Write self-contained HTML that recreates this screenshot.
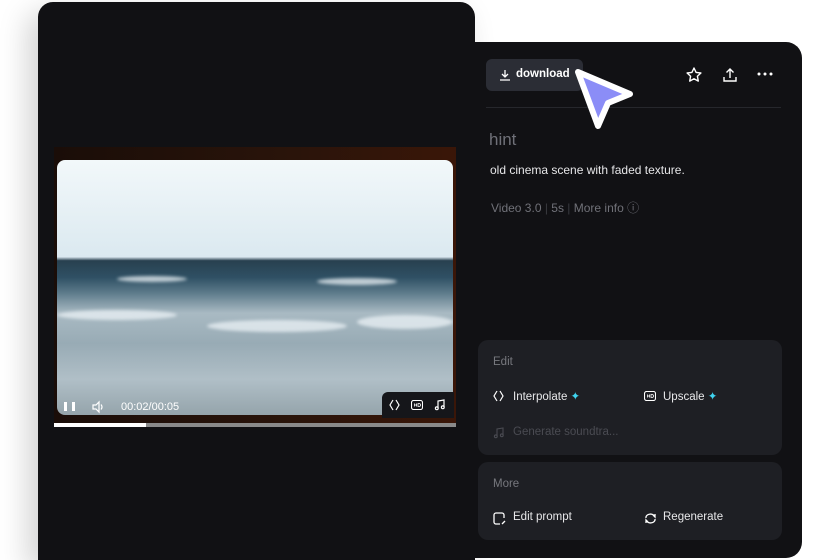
<!DOCTYPE html>
<html><head><meta charset="utf-8"><style>
*{box-sizing:border-box;margin:0;padding:0}
html,body{width:840px;height:560px;overflow:hidden}
body{background:#fff;position:relative;font-family:"Liberation Sans",sans-serif}
.left{position:absolute;left:38px;top:2px;width:437px;height:558px;background:#111114;border-radius:15px 15px 0 0;box-shadow:-10px 10px 30px rgba(0,0,0,.18)}
.right{position:absolute;left:470px;top:42px;width:332px;height:516px;background:#111114;border-radius:0 16px 16px 0}
.frame{position:absolute;left:54px;top:147px;width:402px;height:277px;background:linear-gradient(90deg,#1a0d08,#2a140a 60%,#3a1608);}
.img{position:absolute;left:57px;top:160px;width:396px;height:255px;border-radius:8px;overflow:hidden;
background:linear-gradient(180deg,#f2f8fa 0%,#dbe9f0 38%,#28404f 39.5%,#2f5064 46%,#5c7a8a 52%,#a9bac3 60%,#98abb5 72%,#b0bfc7 86%,#95a4ab 100%)}
.w{position:absolute;background:rgba(235,242,245,.75);border-radius:50%;filter:blur(1.5px)}
.prog{position:absolute;top:423px;height:4px}
.ctl{position:absolute;color:#fff;font-size:11px}
.t{position:absolute;white-space:nowrap}
.card{position:absolute;left:478px;width:304px;background:#1e1f24;border-radius:10px}
svg{position:absolute}
</style></head><body>
<div class="left"></div>
<div class="frame"></div>
<div class="img">
<div class="w" style="left:60px;top:116px;width:70px;height:6px"></div>
<div class="w" style="left:260px;top:118px;width:80px;height:7px"></div>
<div class="w" style="left:0px;top:150px;width:120px;height:10px"></div>
<div class="w" style="left:150px;top:160px;width:140px;height:12px"></div>
<div class="w" style="left:300px;top:155px;width:96px;height:14px"></div>
</div>
<div class="prog" style="left:54px;width:92px;background:#fff"></div>
<div class="prog" style="left:146px;width:310px;background:#8a8a8a"></div>
<div style="position:absolute;left:64px;top:402px;width:3px;height:9px;background:#fff"></div>
<div style="position:absolute;left:72px;top:402px;width:3px;height:9px;background:#fff"></div>
<svg style="left:91px;top:400px" width="14" height="14" viewBox="0 0 14 14" fill="none" stroke="#fff" stroke-width="1.2"><path d="M2 5h3l3-3v10l-3-3H2z"/><path d="M10 4.5q2 2.5 0 5"/></svg>
<div class="ctl t" style="left:121px;top:401px">00:02/00:05</div>
<div style="position:absolute;left:382px;top:392px;width:72px;height:26px;background:#15161a;border-radius:6px 0 0 0"></div>
<svg style="left:389px;top:399px" width="12" height="12" viewBox="0 0 12 12" fill="none" stroke="#fff" stroke-width="1.2"><path d="M4 1L1 6l3 5M7 1l3 5-3 5"/></svg>
<svg style="left:411px;top:400px" width="12" height="10" viewBox="0 0 12 10" fill="none" stroke="#fff" stroke-width="1.1"><rect x="0.5" y="0.5" width="11" height="9" rx="2"/><path d="M3.5 3.5v3M5.5 3.5v3M3.5 5h2M7 3.5v3h1a1.5 1.5 0 0 0 0-3z" stroke-width="0.8"/></svg>
<svg style="left:434px;top:399px" width="12" height="12" viewBox="0 0 12 12" fill="none" stroke="#fff" stroke-width="1.2"><path d="M4 9V2l6-1v7"/><circle cx="2.8" cy="9.3" r="1.4"/><circle cx="8.8" cy="8.3" r="1.4"/></svg>

<div class="right"></div>
<div style="position:absolute;left:486px;top:59px;width:97px;height:32px;background:#2b2d35;border-radius:6px"></div>
<svg style="left:499px;top:69px" width="12" height="12" viewBox="0 0 12 12" fill="none" stroke="#fff" stroke-width="1.3"><path d="M6 1v7M3 5l3 3 3-3M1 11h10"/></svg>
<div class="t" style="left:516px;top:68px;color:#fff;font-size:11.5px;font-weight:bold">download</div>
<svg style="left:685px;top:66px" width="18" height="18" viewBox="0 0 18 18" fill="none" stroke="#fff" stroke-width="1.4"><path d="M9 2l2.1 4.4 4.8.6-3.5 3.3.9 4.8L9 12.8 4.7 15.1l.9-4.8L2.1 7l4.8-.6z" stroke-linejoin="round"/></svg>
<svg style="left:721px;top:66px" width="18" height="18" viewBox="0 0 18 18" fill="none" stroke="#fff" stroke-width="1.4"><path d="M9 12V3M5.5 6.5L9 3l3.5 3.5M3 11v4h12v-4"/></svg>
<svg style="left:757px;top:72px" width="16" height="4" viewBox="0 0 16 4" fill="#fff"><circle cx="2" cy="2" r="1.5"/><circle cx="8" cy="2" r="1.5"/><circle cx="14" cy="2" r="1.5"/></svg>
<div style="position:absolute;left:486px;top:107px;width:295px;height:1px;background:#26272c"></div>
<svg style="left:568px;top:62px" width="72" height="72" viewBox="0 0 72 72"><path d="M10 10L62 32 40 41 30 64z" fill="#8b8df7" stroke="#fff" stroke-width="6" stroke-linejoin="round"/></svg>
<div class="t" style="left:489px;top:130px;color:#6f7078;font-size:17px">hint</div>
<div class="t" style="left:490px;top:163px;color:#e6e6e8;font-size:12px">old cinema scene with faded texture.</div>
<div class="t" style="left:491px;top:199px;color:#707178;font-size:12px">Video 3.0 <span style="color:#3a3b40">|</span> 5s <span style="color:#3a3b40">|</span> More info ⓘ</div>

<div class="card" style="top:340px;height:115px"></div>
<div class="t" style="left:493px;top:356px;color:#77787e;font-size:11.5px">Edit</div>
<svg style="left:493px;top:390px" width="12" height="12" viewBox="0 0 12 12" fill="none" stroke="#fff" stroke-width="1.2"><path d="M4 1L1 6l3 5M7 1l3 5-3 5"/></svg>
<div class="t" style="left:513px;top:389px;color:#e8e8ea;font-size:11.5px">Interpolate <span style="color:#3fd4f0">✦</span></div>
<svg style="left:644px;top:391px" width="12" height="10" viewBox="0 0 12 10" fill="none" stroke="#fff" stroke-width="1.1"><rect x="0.5" y="0.5" width="11" height="9" rx="2"/><path d="M3.5 3.5v3M5.5 3.5v3M3.5 5h2M7 3.5v3h1a1.5 1.5 0 0 0 0-3z" stroke-width="0.8"/></svg>
<div class="t" style="left:663px;top:389px;color:#e8e8ea;font-size:11.5px">Upscale <span style="color:#3fd4f0">✦</span></div>
<svg style="left:493px;top:427px" width="12" height="12" viewBox="0 0 12 12" fill="none" stroke="#4a4b52" stroke-width="1.1"><path d="M4 9V2l6-1v7"/><circle cx="2.8" cy="9.3" r="1.4"/><circle cx="8.8" cy="8.3" r="1.4"/></svg>
<div class="t" style="left:513px;top:426px;color:#4a4b52;font-size:11.5px">Generate soundtra...</div>

<div class="card" style="top:462px;height:78px"></div>
<div class="t" style="left:493px;top:478px;color:#77787e;font-size:11.5px">More</div>
<svg style="left:493px;top:512px" width="13" height="13" viewBox="0 0 13 13" fill="none" stroke="#fff" stroke-width="1.3"><path d="M11 6V3a2 2 0 0 0-2-2H3a2 2 0 0 0-2 2v7a2 2 0 0 0 2 2h4"/><path d="M9 12l3-3"/></svg>
<div class="t" style="left:513px;top:511px;color:#e8e8ea;font-size:11.5px">Edit prompt</div>
<svg style="left:644px;top:512px" width="13" height="13" viewBox="0 0 13 13" fill="none" stroke="#fff" stroke-width="1.3"><path d="M2 6a4 3 0 0 1 9-1M11 7a4 3 0 0 1-9 1M9 3l2 2 0-3M4 10L2 8v3"/></svg>
<div class="t" style="left:663px;top:511px;color:#e8e8ea;font-size:11.5px">Regenerate</div>
</body></html>
